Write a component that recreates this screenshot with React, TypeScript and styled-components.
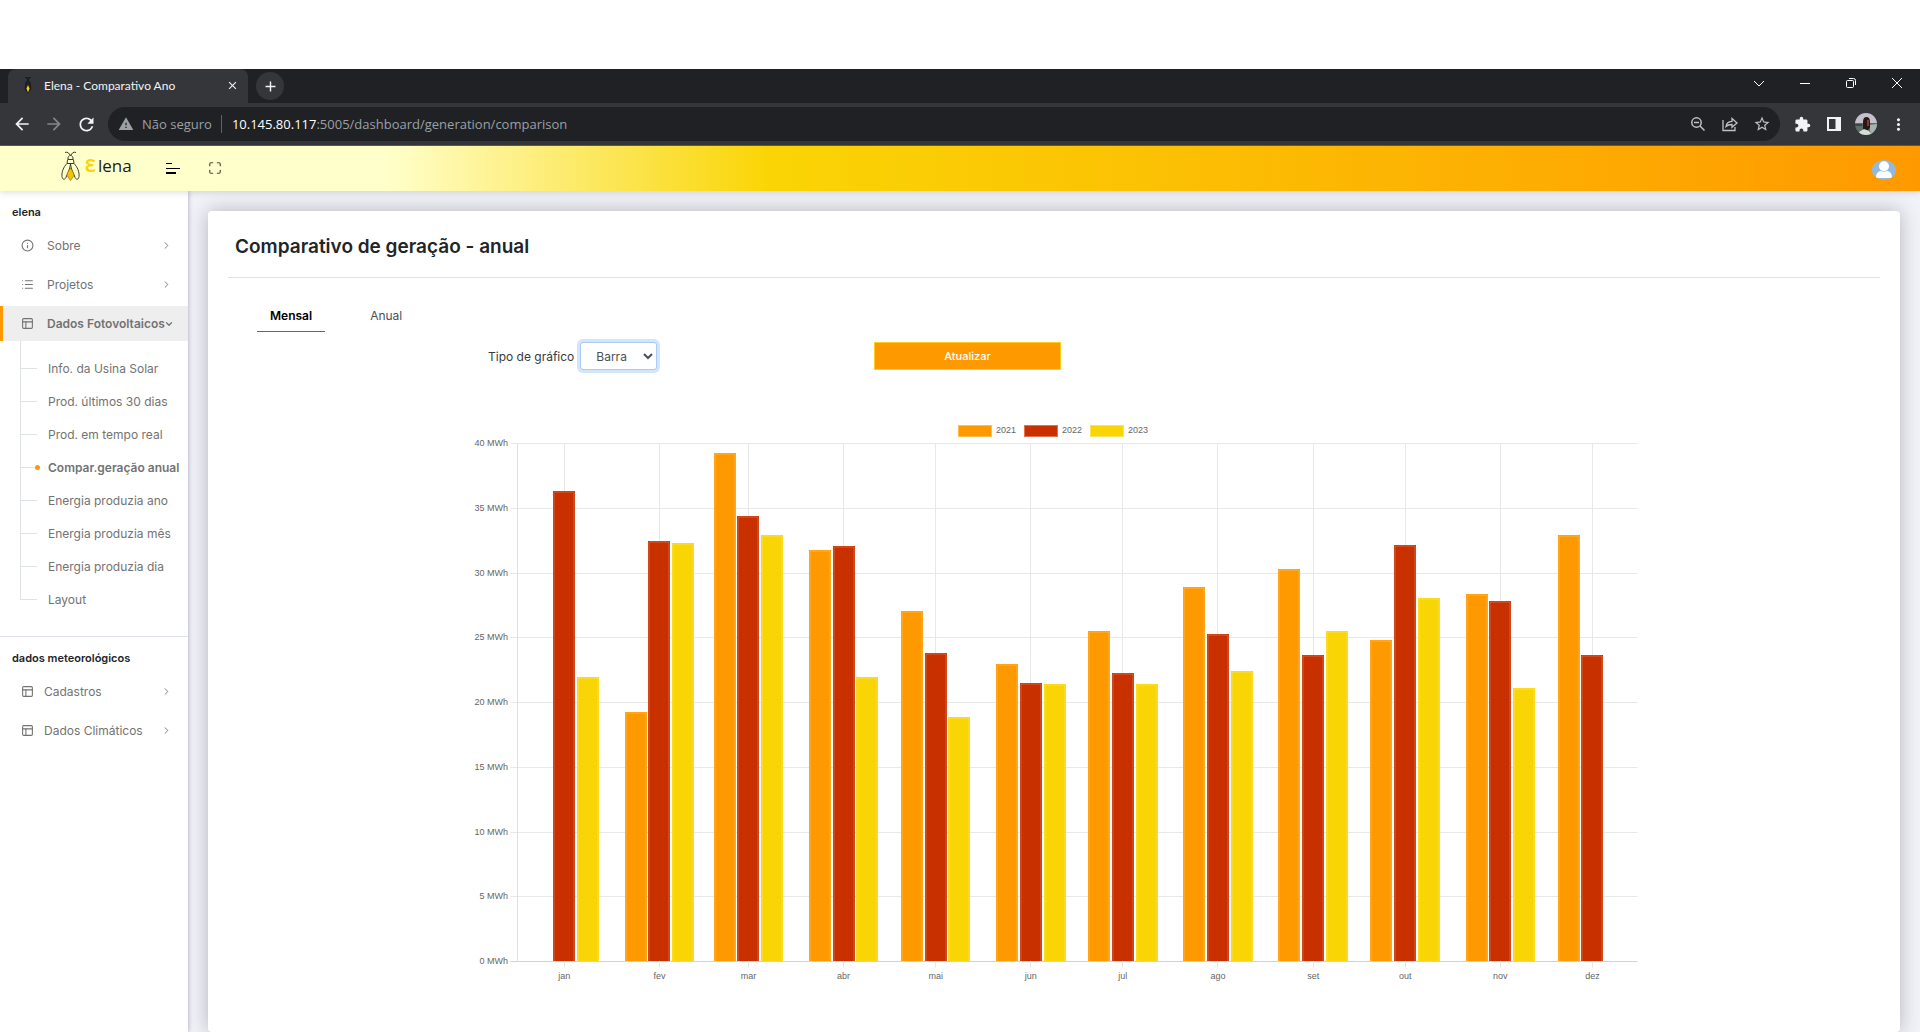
import React from "react";
import styled, { createGlobalStyle } from "styled-components";
import {
  ChevronDown,
  ChevronRight,
  Info,
  List,
  Maximize,
  PanelsTopLeft,
} from "lucide-react";
import {
  MdArrowBack,
  MdArrowForward,
  MdClose,
  MdExtension,
  MdMoreVert,
  MdAdd,
  MdRefresh,
  MdStarBorder,
  MdWarning,
} from "react-icons/md";

const GlobalStyle = createGlobalStyle`
  *, *::before, *::after { box-sizing: border-box; }
  body { margin: 0; background: #fff; font-family: Inter, "Open Sans", sans-serif; }
  button, select, input { font: inherit; margin: 0; }
  button { cursor: pointer; }
  ul { list-style: none; margin: 0; padding: 0; }
  svg { display: block; flex: none; }
`;

const colors = {
  orange: "#ff9900",
  red: "#c93000",
  yellow: "#fad505",
  ink: "#212529",
  muted: "#737373",
  line: "#dee2e6",
};

const Screen = styled.div`
  display: flex;
  flex-direction: column;
  height: 100vh;
  padding-top: 69px;
  overflow: hidden;
`;

/* ---------- browser window ---------- */

const TabStrip = styled.div`
  display: flex;
  align-items: stretch;
  flex: none;
  height: 34px;
  padding-left: 8px;
  background: #202124;
`;

const BrowserTab = styled.div`
  display: flex;
  align-items: center;
  gap: 8px;
  width: 240px;
  padding: 0 8px 2px 12px;
  border-radius: 8px 8px 0 0;
  background: #35363a;
  color: #f1f3f4;
  font: 12px Lato, "Open Sans", sans-serif;
`;

const TabTitle = styled.span`
  flex: 1;
`;

const ChromeButton = styled.button<{ $dim?: boolean; $w?: number }>`
  display: flex;
  align-items: center;
  justify-content: center;
  flex: none;
  width: ${(p) => p.$w ?? 32}px;
  padding: 0;
  border: 0;
  background: none;
  color: ${(p) => (p.$dim ? "#85868a" : "#f1f3f4")};
`;

const NewTab = styled(ChromeButton)`
  align-self: center;
  height: 28px;
  margin-left: 8px;
  border-radius: 50%;
  background: #35363a;
`;

const WindowControls = styled.div`
  display: flex;
  height: 28px;
  margin-left: auto;
`;

const AddressBar = styled.div`
  display: flex;
  align-items: center;
  flex: none;
  height: 43px;
  padding: 0 6px;
  background: #35363a;
  border-bottom: 1px solid #5b5b55;
`;

const Omnibox = styled.div`
  display: flex;
  align-items: center;
  flex: 1;
  height: 34px;
  margin: 0 6px;
  padding: 0 2px 0 10px;
  border-radius: 17px;
  background: #202124;
  color: #9aa0a6;
  font: 13px "Open Sans", "Noto Sans", sans-serif;
`;

const Security = styled.span`
  display: flex;
  align-items: center;
  gap: 8px;
  padding-right: 9px;
  border-right: 1px solid #5f6368;
`;

const Url = styled.span`
  flex: 1;
  padding-left: 10px;
  b {
    font-weight: 400;
    color: #fff;
  }
`;

/* ---------- application header ---------- */

const Header = styled.header`
  position: relative;
  z-index: 2;
  display: flex;
  align-items: center;
  flex: none;
  height: 45px;
  padding: 0 24px 2px 61px;
  background: linear-gradient(to right, #ffffcc 20%, #fad505 40%, #ff9900 100%);
  box-shadow: 0 2px 6px rgba(0, 0, 0, 0.12);
`;

const Brand = styled.a`
  display: flex;
  align-items: center;
  gap: 5px;
  width: 99px;
  padding-bottom: 3px;
  color: #1c1c10;
  font: 17px/24px "Open Sans", "Noto Sans", sans-serif;
  text-decoration: none;
`;

const BrandInitial = styled.span`
  color: ${colors.yellow};
  font-weight: 700;
  font-family: "Noto Sans", "DejaVu Sans", sans-serif;
  margin-right: 2px;
`;

const HeaderButton = styled.button`
  display: flex;
  align-items: center;
  justify-content: center;
  width: 26px;
  height: 26px;
  margin-right: 16px;
  padding: 0;
  border: 0;
  background: none;
  color: #4a4a38;
`;

const ProfileButton = styled(HeaderButton)`
  width: 24px;
  margin: 4px 0 0 auto;
`;

/* ---------- sidebar ---------- */

const Body = styled.div`
  display: flex;
  flex: 1;
  min-height: 0;
`;

const Sidebar = styled.nav`
  position: relative;
  z-index: 1;
  flex: none;
  width: 188px;
  padding-top: 11px;
  background: #fff;
  box-shadow: 1px 0 4px rgba(60, 60, 90, 0.3);
`;

const SectionTitle = styled.h2`
  margin: 0;
  padding: 0 12px;
  color: ${colors.ink};
  font-size: 11px;
  font-weight: 600;
  line-height: 20px;
`;

const Menu = styled.ul`
  display: flex;
  flex-direction: column;
  gap: 4px;
  padding: 6px 0 0;
`;

const MenuLink = styled.a<{ $active?: boolean; $gap: number }>`
  display: flex;
  align-items: center;
  gap: ${(p) => p.$gap}px;
  height: 35px;
  padding: 0 ${(p) => (p.$active ? 14 : 16)}px 0 18px;
  border-left: 3px solid ${(p) => (p.$active ? colors.orange : "transparent")};
  background: ${(p) => (p.$active ? "#eeeeee" : "transparent")};
  color: ${colors.muted};
  font-size: 12px;
  font-weight: ${(p) => (p.$active ? 600 : 400)};
  text-decoration: none;
  white-space: nowrap;
`;

const MenuEnd = styled.span`
  margin-left: auto;
`;

const MenuText = styled.span`
  flex: 1;
  width: 0;
`;

const SubMenu = styled.ul`
  padding: 11px 0 20px 20px;
  background: linear-gradient(${colors.line}, ${colors.line}) 20px 0 / 1px calc(100% - 36px) no-repeat;
`;

const SubItem = styled.li`
  display: flex;
  align-items: center;
  height: 33px;
`;

const Branch = styled.span<{ $active: boolean }>`
  display: flex;
  align-items: center;
  width: 28px;
  &::before {
    content: "";
    width: ${(p) => (p.$active ? 15 : 17)}px;
    height: 1px;
    background: ${colors.line};
  }
  &::after {
    content: "";
    width: ${(p) => (p.$active ? 5 : 0)}px;
    height: 5px;
    border-radius: 50%;
    background: ${colors.orange};
  }
`;

const SubLink = styled.a<{ $active: boolean }>`
  color: ${colors.muted};
  font-size: 12px;
  font-weight: ${(p) => (p.$active ? 600 : 400)};
  text-decoration: none;
  white-space: nowrap;
`;

const Divider = styled.hr`
  margin: 0 0 11px;
  border: 0;
  border-top: 1px solid ${colors.line};
`;

/* ---------- content ---------- */

const Main = styled.main`
  flex: 1;
  min-width: 0;
  padding: 20px 20px 0;
  background: #f2f3f9;
`;

const Card = styled.section`
  min-height: 100%;
  padding: 0 20px 40px;
  border-radius: 4px;
  background: #fff;
  box-shadow: 0 0 20px rgba(50, 45, 60, 0.32);
`;

const CardTitle = styled.h1`
  margin: 0;
  padding: 20px 7px 14px;
  border-bottom: 1px solid ${colors.line};
  color: ${colors.ink};
  font-size: 19px;
  font-weight: 600;
  line-height: 32px;
`;

const Tabs = styled.div`
  display: flex;
  gap: 32px;
  padding: 22px 29px 0;
`;

const Tab = styled.button<{ $active?: boolean }>`
  height: 32px;
  padding: 0 13px;
  border: 0;
  border-bottom: 1px solid ${(p) => (p.$active ? "#b8473a" : "transparent")};
  background: none;
  color: ${(p) => (p.$active ? "#000" : "#495057")};
  font-size: 12px;
  font-weight: ${(p) => (p.$active ? 600 : 400)};
`;

const ChartArea = styled.div`
  max-width: 1180px;
  margin: 10px auto 0;
`;

const Controls = styled.form`
  display: grid;
  grid-template-columns: 386px 187px;
  align-items: center;
  padding-left: 24px;
  margin-bottom: 50px;
`;

const Field = styled.div`
  display: flex;
  align-items: center;
  gap: 6px;
  color: #343a40;
  font-size: 12px;
`;

const Select = styled.select`
  width: 77px;
  height: 28px;
  padding: 0 0 0 11px;
  border: 1px solid #a9cbf5;
  border-radius: 3px;
  outline: 0;
  background: #fff;
  box-shadow: 0 0 0 3px #d3e5fb;
  color: #495057;
`;

const Submit = styled.button`
  height: 28px;
  border: 1px solid #ffcf1a;
  background: ${colors.orange};
  color: #fff;
  font-size: 11px;
  font-weight: 500;
`;

const ChartSvg = styled.svg`
  width: 100%;
  height: auto;
  text {
    font-family: "Liberation Sans", Arial, sans-serif;
    font-size: 9px;
    fill: #666;
  }
`;

/* ---------- data ---------- */

const months = [
  { name: "jan", day: 0, values: [null, 36.35, 21.95] },
  { name: "fev", day: 31, values: [19.25, 32.5, 32.3] },
  { name: "mar", day: 60, values: [39.25, 34.4, 32.95] },
  { name: "abr", day: 91, values: [31.75, 32.05, 21.95] },
  { name: "mai", day: 121, values: [27.1, 23.85, 18.85] },
  { name: "jun", day: 152, values: [22.95, 21.5, 21.4] },
  { name: "jul", day: 182, values: [25.5, 22.3, 21.4] },
  { name: "ago", day: 213, values: [28.95, 25.3, 22.4] },
  { name: "set", day: 244, values: [30.3, 23.7, 25.5] },
  { name: "out", day: 274, values: [24.85, 32.2, 28.1] },
  { name: "nov", day: 305, values: [28.35, 27.8, 21.15] },
  { name: "dez", day: 335, values: [32.95, 23.65, null] },
];

const series = [
  { name: "2021", color: colors.orange, edge: "#ffbd52" },
  { name: "2022", color: colors.red, edge: "#dd7350" },
  { name: "2023", color: colors.yellow, edge: "#fbe45c" },
];

const subPages = [
  "Info. da Usina Solar",
  "Prod. últimos 30 dias",
  "Prod. em tempo real",
  "Compar.geração anual",
  "Energia produzia ano",
  "Energia produzia mês",
  "Energia produzia dia",
  "Layout",
];

/* ---------- drawings ---------- */

function Firefly() {
  return (
    <svg width="19" height="31" viewBox="0 0 19 31" fill="none" stroke="#3c3c28" strokeWidth="1">
      <path d="M4 1.500q2-1 3.500.5l2 2.500 2-2.500q1.500-1.500 3.500-.5" />
      <path d="M7 8.500c-.3-2.500.8-4 2.500-4s2.800 1.500 2.500 4M6.500 8.500h6" />
      <path d="M6.500 9L6 12.500h7L12.500 9" />
      <path d="M6 12.500C2.500 16 .5 21 1 25.500c.5 4 3.500 3.500 4.500-.5C7.500 21 9 17 9.500 13" />
      <path d="M13 12.500c3.500 3.500 5.500 8.500 5 13-.5 4-3.500 3.500-4.500-.5-2-4-3.500-8-4-12" />
      <path d="M9.500 17c1.500 2.500 3.500 5 3.500 7.500l-3.500 5-3.500-5c0-2.500 2-5 3.500-7.500z" fill="#f5c400" stroke="#8a7420" strokeWidth=".7" />
    </svg>
  );
}

function Favicon() {
  return (
    <svg width="16" height="18" viewBox="0 0 16 18">
      <path d="M5 1l3 3 3-3M6 6l2-2 2 2 1 7-3 4-3-4z" fill="#202124" stroke="#1b1c1f" />
      <path d="M8 9l1.500 3.500L8 16.500l-1.500-4z" fill="#f5cf1b" />
    </svg>
  );
}

function ZoomOut() {
  return (
    <svg width="14" height="14" viewBox="0 0 14 14" fill="none" stroke="#bdc1c6" strokeWidth="1.500">
      <circle cx="5.500" cy="5.500" r="4.700" />
      <path d="M3 5.500h5M9 9l4.500 4.500" />
    </svg>
  );
}

function Share() {
  return (
    <svg width="16" height="16" viewBox="0 0 16 16" fill="none" stroke="#bdc1c6" strokeWidth="1.300">
      <path d="M1 4v10.500h12V11" />
      <path d="M4 10.500C4.500 7 6.500 5.500 10 5.300V2.500L15 7l-5 4.300V8.500C7.500 8.500 5.500 9 4 10.500z" />
    </svg>
  );
}

function SidePanel() {
  return (
    <svg width="14" height="14" viewBox="0 0 14 14">
      <path d="M0 0h14v14H0zM2 2v10h6.500V2z" fill="#f1f3f4" fillRule="evenodd" />
    </svg>
  );
}

function BrowserAvatar() {
  return (
    <svg width="22" height="22" viewBox="0 0 22 22">
      <clipPath id="avatar-clip"><circle cx="11" cy="11" r="11" /></clipPath>
      <g clipPath="url(#avatar-clip)">
        <rect width="22" height="11" fill="#c6c0cc" />
        <rect y="10" width="22" height="12" fill="#5f6f68" />
        <path d="M0 11h7v2H0z" fill="#39474b" />
        <path d="M14 12l8-1v8l-6 3z" fill="#a5b4ac" />
        <path d="M8 17V9q0-5 3.500-5t3.500 5v6l-2 2z" fill="#2a1715" />
        <path d="M12 7h2v6h-2z" fill="#7d3b32" />
        <path d="M4 19l5-3 5 2 3 4H5z" fill="#d4ddd6" />
      </g>
    </svg>
  );
}

function UserAvatar() {
  return (
    <svg width="24" height="20" viewBox="0 0 24 20">
      <clipPath id="user-clip"><ellipse cx="12" cy="10" rx="12" ry="10" /></clipPath>
      <g clipPath="url(#user-clip)">
        <rect width="24" height="20" fill="#93bade" />
        <ellipse cx="12" cy="6.300" rx="5" ry="5" fill="#fff" />
        <path d="M4 18c0-5 2.500-7 5-7q3 1.500 6 0c2.500 0 5 2 5 7z" fill="#fff" />
      </g>
    </svg>
  );
}

function MenuLines() {
  return (
    <svg width="14" height="12" viewBox="0 0 14 12" fill="#000">
      <path d="M0 1h6v1H0zM0 6h14v1H0zM0 10h10v2H0z" />
    </svg>
  );
}

/* Window button glyphs, drawn on a 10px grid */
const windowGlyphs = [
  { label: "Pesquisar guias", path: "M0 3l5 5 5-5" },
  { label: "Minimizar", path: "M0 5.500h10" },
  { label: "Restaurar", path: "M.5 3.500q0-1 1-1h5q1 0 1 1v5q0 1-1 1h-5q-1 0-1-1zM3 .5h4.500q2 0 2 2V7" },
  { label: "Fechar", path: "M0 0l10 10M10 0L0 10" },
];

/* ---------- chart ---------- */

const plot = { left: 53.5, right: 1173.5, top: 23.5, bottom: 541.5 };
const pxPerDay = 3.069;
const yOf = (v: number) => plot.bottom - (v / 40) * (plot.bottom - plot.top);
const xOf = (day: number) => 100.3 + day * pxPerDay;

function Chart() {
  return (
    <ChartSvg viewBox="0 0 1180 570" role="img" aria-label="Comparativo de geração mensal">
      {series.map((s, i) => (
        <g key={s.name}>
          <rect x={494.5 + i * 66} y={5.5} width={33} height={11} fill={s.color} stroke={s.edge} />
          <text x={532 + i * 66} y={13}>{s.name}</text>
        </g>
      ))}
      {[0, 5, 10, 15, 20, 25, 30, 35, 40].map((v) => {
        const y = Math.floor(yOf(v)) + 0.5;
        return (
          <g key={v}>
            <line x1={plot.left - 7} x2={plot.right} y1={y} y2={y} stroke={v ? "#e8e8e8" : "#d2d2d2"} />
            <text x={44} y={y + 2} textAnchor="end">{v} MWh</text>
          </g>
        );
      })}
      <line x1={plot.left} x2={plot.left} y1={plot.top} y2={plot.bottom} stroke="#e0e0e0" />
      {months.map((m) => {
        const x = xOf(m.day);
        const gx = Math.floor(x) + 0.5;
        return (
          <g key={m.name}>
            <line x1={gx} x2={gx} y1={plot.top} y2={plot.bottom + 6} stroke="#e8e8e8" />
            {m.values.map((v, i) => {
              if (v === null) return null;
              const left = Math.round(x + (i - 1) * 23.75 - 11);
              const top = Math.round(yOf(v));
              return (
                <g key={series[i].name}>
                  <rect x={left} y={top} width={22} height={541 - top} fill={series[i].color} />
                  <path
                    d={`M${left + 1} 541V${top + 1}H${left + 21}V541`}
                    fill="none"
                    stroke={series[i].edge}
                    strokeOpacity={0.7}
                  />
                </g>
              );
            })}
            <text x={x} y={559} textAnchor="middle">{m.name}</text>
          </g>
        );
      })}
    </ChartSvg>
  );
}

function MenuEntry(props: { icon: React.ReactNode; text: string; active?: boolean; gap?: number }) {
  const { icon, text, active, gap = 13 } = props;
  return (
    <MenuLink href="#" $active={active} $gap={gap}>
      {icon}
      <MenuText>{text}</MenuText>
      <MenuEnd>
        {active ? <ChevronDown size={10} strokeWidth={3} /> : <ChevronRight size={11} />}
      </MenuEnd>
    </MenuLink>
  );
}

export default function App() {
  return (
    <Screen>
      <GlobalStyle />
      <TabStrip>
        <BrowserTab>
          <Favicon />
          <TabTitle>Elena - Comparativo Ano</TabTitle>
          <ChromeButton $w={16} aria-label="Fechar guia"><MdClose size={13} /></ChromeButton>
        </BrowserTab>
        <NewTab $w={28} aria-label="Nova guia"><MdAdd size={17} /></NewTab>
        <WindowControls>
          {windowGlyphs.map((g) => (
            <ChromeButton key={g.label} $w={46} aria-label={g.label}>
              <svg width="10" height="10" viewBox="0 0 10 10" fill="none" stroke="#fff" overflow="visible">
                <path d={g.path} />
              </svg>
            </ChromeButton>
          ))}
        </WindowControls>
      </TabStrip>
      <AddressBar>
        <ChromeButton aria-label="Voltar"><MdArrowBack size={20} /></ChromeButton>
        <ChromeButton $dim aria-label="Avançar"><MdArrowForward size={20} /></ChromeButton>
        <ChromeButton aria-label="Recarregar"><MdRefresh size={21} /></ChromeButton>
        <Omnibox>
          <Security><MdWarning size={16} />Não seguro</Security>
          <Url><b>10.145.80.117</b>:5005/dashboard/generation/comparison</Url>
          <ChromeButton aria-label="Zoom"><ZoomOut /></ChromeButton>
          <ChromeButton aria-label="Compartilhar"><Share /></ChromeButton>
          <ChromeButton aria-label="Favoritos"><MdStarBorder size={18} color="#bdc1c6" /></ChromeButton>
        </Omnibox>
        <ChromeButton aria-label="Extensões"><MdExtension size={17} /></ChromeButton>
        <ChromeButton aria-label="Painel lateral"><SidePanel /></ChromeButton>
        <ChromeButton aria-label="Perfil"><BrowserAvatar /></ChromeButton>
        <ChromeButton aria-label="Menu"><MdMoreVert size={19} /></ChromeButton>
      </AddressBar>
      <Header>
        <Brand href="#">
          <Firefly />
          <span><BrandInitial>Ɛ</BrandInitial>lena</span>
        </Brand>
        <HeaderButton aria-label="Alternar menu"><MenuLines /></HeaderButton>
        <HeaderButton aria-label="Tela cheia"><Maximize size={14} strokeWidth={2} /></HeaderButton>
        <ProfileButton aria-label="Usuário"><UserAvatar /></ProfileButton>
      </Header>
      <Body>
        <Sidebar>
          <SectionTitle>elena</SectionTitle>
          <Menu>
            <li><MenuEntry icon={<Info size={13} />} text="Sobre" /></li>
            <li><MenuEntry icon={<List size={13} />} text="Projetos" /></li>
            <li>
              <MenuEntry icon={<PanelsTopLeft size={13} />} text="Dados Fotovoltaicos" active />
              <SubMenu>
                {subPages.map((page, i) => (
                  <SubItem key={page}>
                    <Branch $active={i === 3} />
                    <SubLink href="#" $active={i === 3}>{page}</SubLink>
                  </SubItem>
                ))}
              </SubMenu>
            </li>
          </Menu>
          <Divider />
          <SectionTitle>dados meteorológicos</SectionTitle>
          <Menu>
            <li><MenuEntry icon={<PanelsTopLeft size={13} />} text="Cadastros" gap={10} /></li>
            <li><MenuEntry icon={<PanelsTopLeft size={13} />} text="Dados Climáticos" gap={10} /></li>
          </Menu>
        </Sidebar>
        <Main>
          <Card>
            <CardTitle>Comparativo de geração - anual</CardTitle>
            <Tabs role="tablist">
              <Tab role="tab" aria-selected $active>Mensal</Tab>
              <Tab role="tab" aria-selected={false}>Anual</Tab>
            </Tabs>
            <ChartArea>
              <Controls onSubmit={(e) => e.preventDefault()}>
                <Field>
                  <label htmlFor="chart-type">Tipo de gráfico</label>
                  <Select id="chart-type" defaultValue="Barra">
                    <option>Barra</option>
                    <option>Linha</option>
                  </Select>
                </Field>
                <Submit type="submit">Atualizar</Submit>
              </Controls>
              <Chart />
            </ChartArea>
          </Card>
        </Main>
      </Body>
    </Screen>
  );
}
